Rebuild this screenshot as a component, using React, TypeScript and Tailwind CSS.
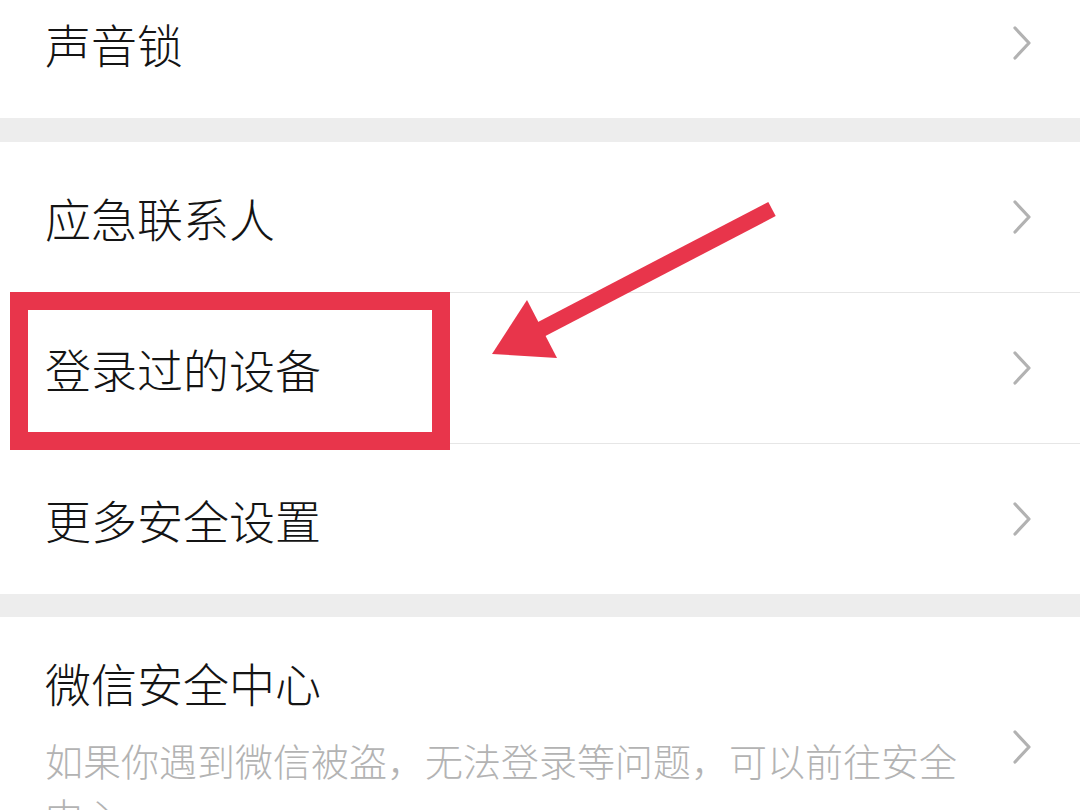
const Chevron = () => (
  <svg viewBox="0 0 20 34" className="h-[34px] w-[20px] shrink-0" fill="none">
    <polyline points="3,2 17,17 3,32" stroke="#b2b2b2" strokeWidth="3.2" strokeLinecap="round" strokeLinejoin="round" />
  </svg>
);

const Row = ({ label }: { label: string }) => (
  <div className="flex h-[150px] items-center justify-between bg-white pl-[45px] pr-[48px]">
    <span className="text-[46px] font-light leading-none text-[#141414]">{label}</span>
    <Chevron />
  </div>
);

const Divider = () => (
  <div className="bg-white pl-[45px]">
    <div className="h-px bg-[#e6e6e6]" />
  </div>
);

export default function App() {
  return (
    <div className="relative h-[810px] w-[1080px] overflow-hidden bg-white font-['Noto_Sans_CJK_SC',sans-serif]">
      <div className="-mt-[32px] flex flex-col">
        <Row label="声音锁" />
        <div className="h-[24px] bg-[#ededed]" />
        <Row label="应急联系人" />
        <Divider />
        <Row label="登录过的设备" />
        <Divider />
        <Row label="更多安全设置" />
        <div className="h-[23px] bg-[#ededed]" />
        <div className="flex items-center justify-between bg-white pb-[25px] pl-[45px] pr-[48px] pt-[34px]">
          <div className="flex max-w-[930px] flex-col gap-[18px]">
            <span className="text-[46px] font-light leading-[63px] text-[#141414]">微信安全中心</span>
            <span className="text-[38px] font-light leading-[55px] text-[#b3b3b3]">
              如果你遇到微信被盗，无法登录等问题，可以前往安全中心
            </span>
          </div>
          <Chevron />
        </div>
      </div>

      {/* annotation */}
      <div className="absolute left-[10px] top-[292px] h-[158px] w-[440px] border-[18px] border-[#e8354b]" />
      <svg className="pointer-events-none absolute inset-0 h-[810px] w-[1080px]" viewBox="0 0 1080 810">
        <line x1="536" y1="332" x2="772" y2="209" stroke="#e8354b" strokeWidth="16" />
        <polygon points="492,354 527,300 557,358" fill="#e8354b" />
      </svg>
    </div>
  );
}
